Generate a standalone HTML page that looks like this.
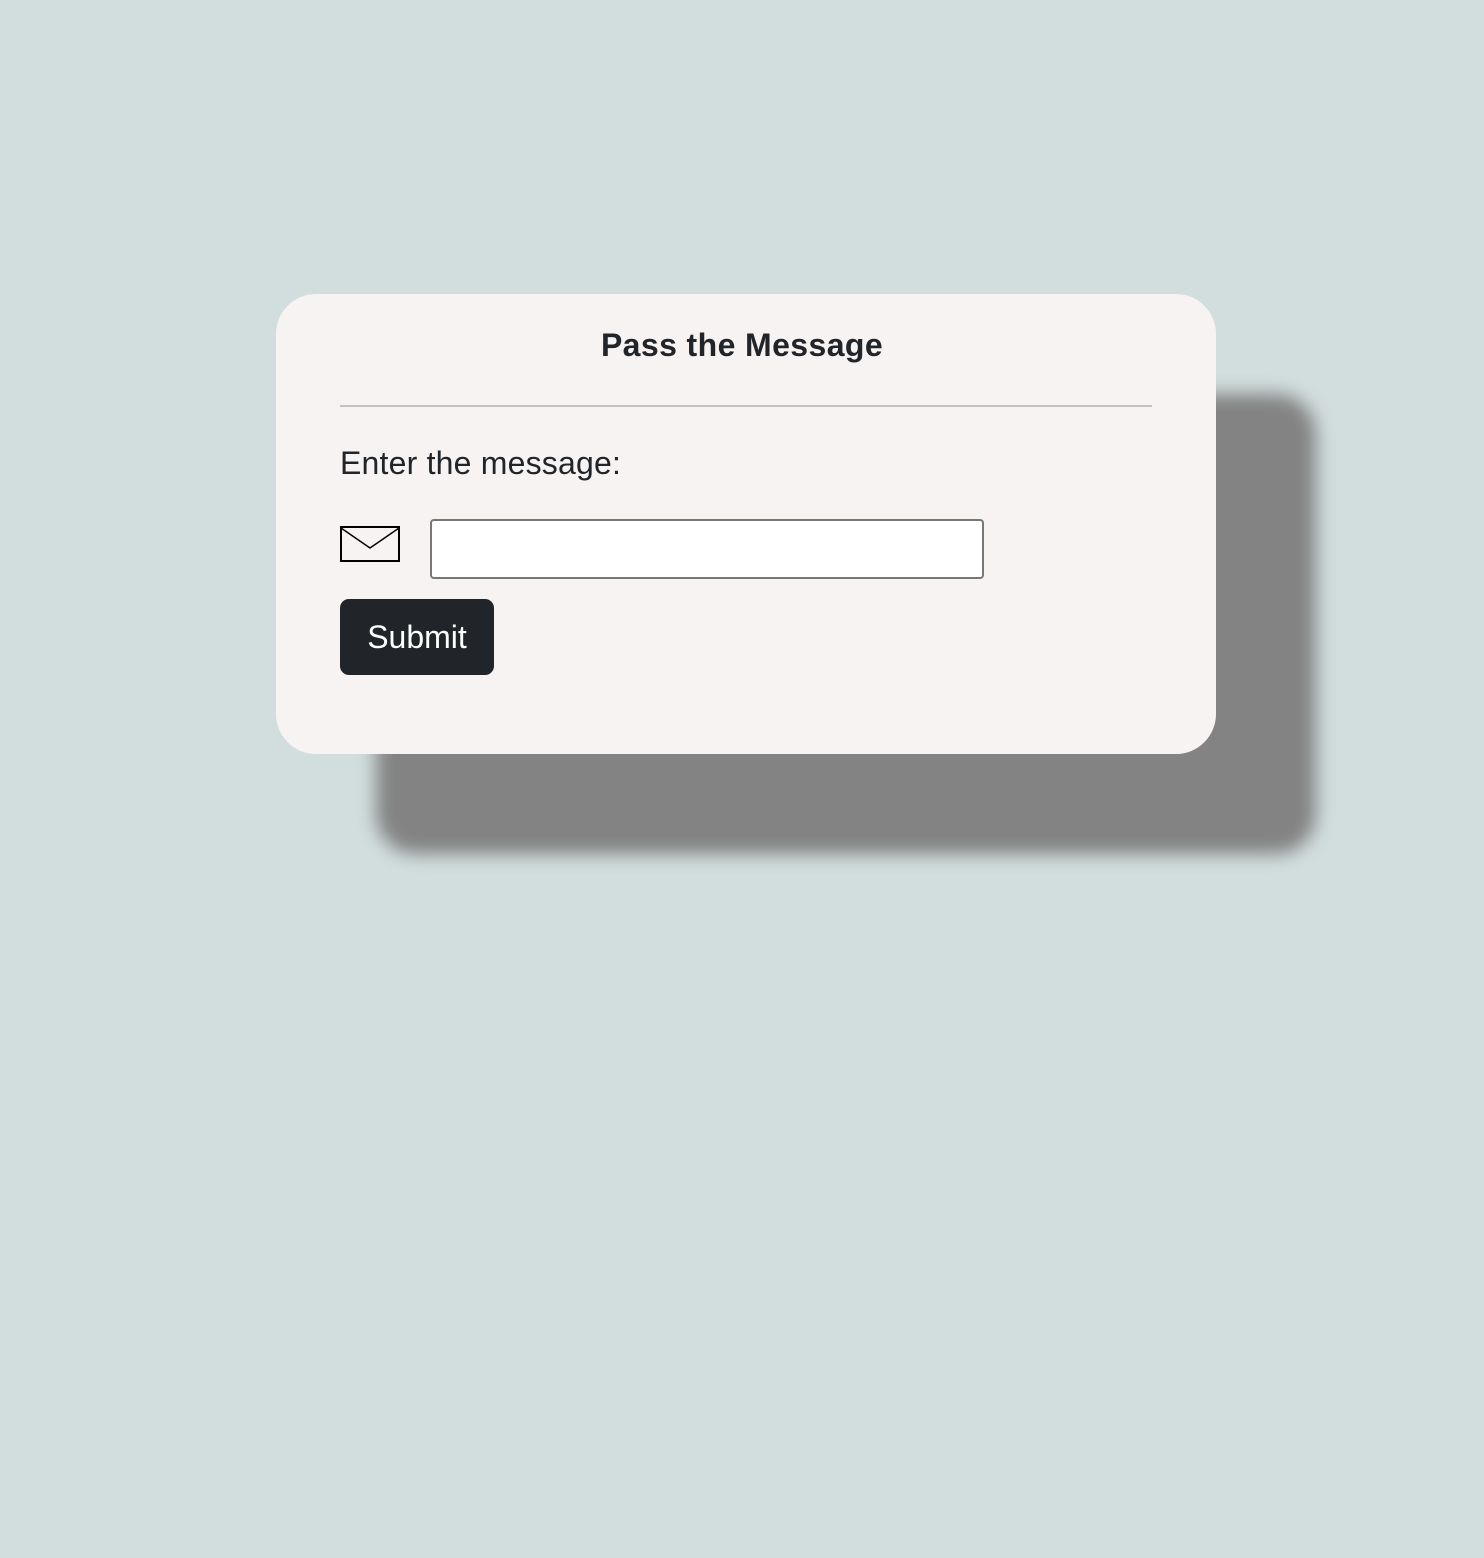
<!DOCTYPE html>
<html><head><style>
html,body{margin:0;padding:0;}
body{width:1484px;height:1558px;background:#d2dede;position:relative;font-family:"Liberation Sans",sans-serif;overflow:hidden;}
.card{position:absolute;left:276px;top:294px;width:940px;height:460px;background:#f6f3f2;border-radius:40px;box-shadow:100px 100px 18px #838383;}
h1{position:absolute;left:0;right:0;top:327px;margin:0;text-align:center;font-size:32px;font-weight:bold;color:#212529;letter-spacing:0.4px;}
.hr{position:absolute;left:340px;top:405px;width:812px;height:2px;background:#c4c1c0;}
.lbl{position:absolute;left:340px;top:445px;font-size:32px;color:#212529;letter-spacing:0.2px;}
.env{position:absolute;left:340px;top:526px;}
.inp{position:absolute;left:430px;top:519px;width:550px;height:56px;background:#fff;border:2px solid #777;border-radius:4px;}
.btn{position:absolute;left:340px;top:599px;width:154px;height:76px;background:#212529;border-radius:9px;color:#fff;font-size:32px;line-height:76px;text-align:center;}
</style></head><body>
<div class="card"></div>
<h1>Pass the Message</h1>
<div class="hr"></div>
<div class="lbl">Enter the message:</div>
<svg class="env" width="60" height="36" viewBox="0 0 60 36"><rect x="1" y="1" width="58" height="34" fill="none" stroke="#000" stroke-width="2"/><path d="M1 2 L30 22 L59 2" fill="none" stroke="#000" stroke-width="1.5"/></svg>
<div class="inp"></div>
<div class="btn">Submit</div>
</body></html>
